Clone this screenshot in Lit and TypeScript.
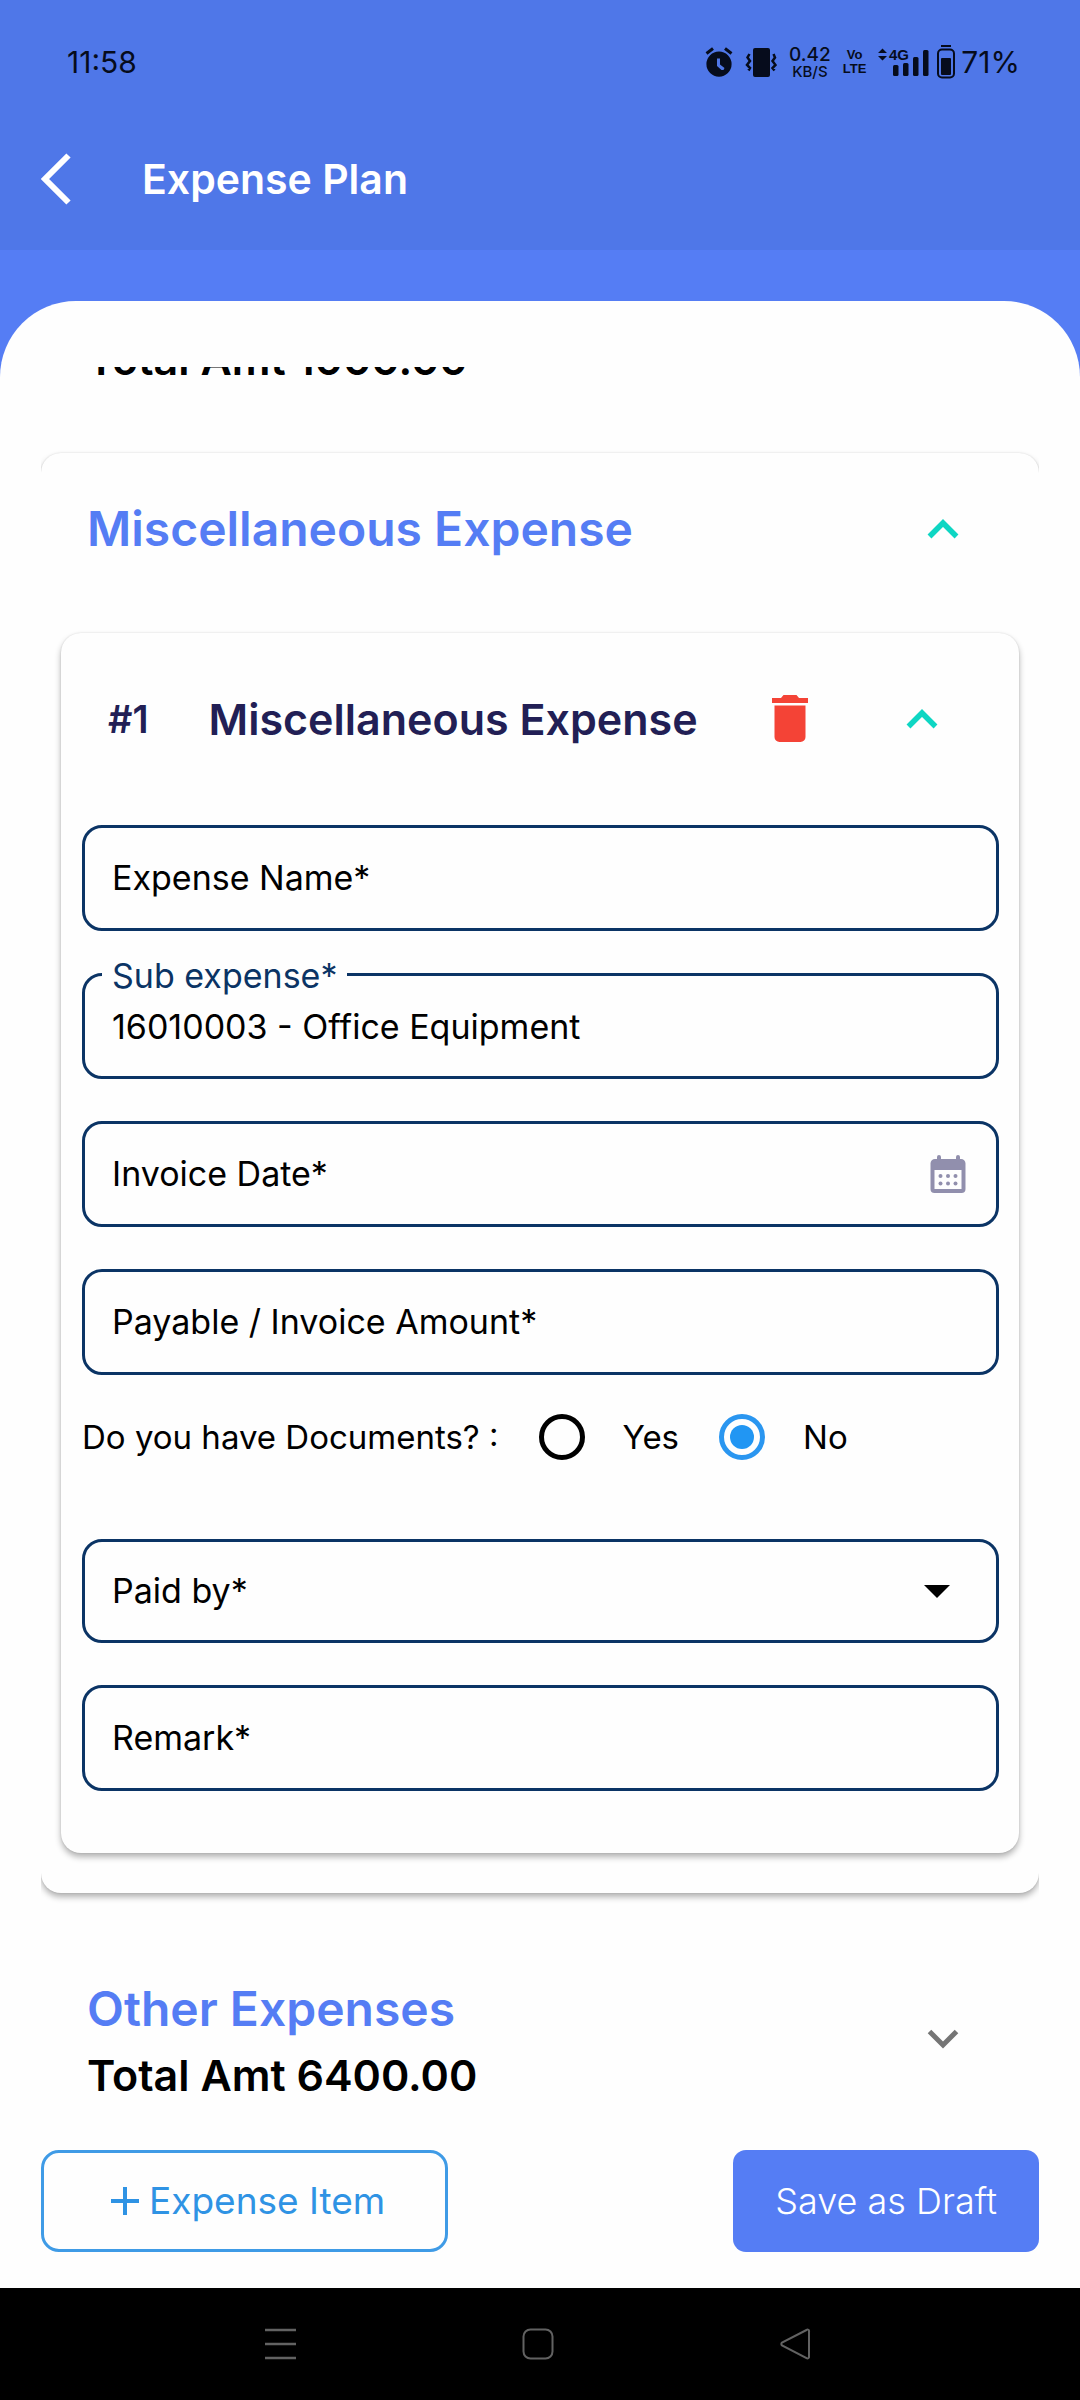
import { LitElement, html, css, svg, nothing } from "lit";
import { customElement, property, state } from "lit/decorators.js";

const chevronUp = html`<svg width="32" height="20" viewBox="0 0 32 20" aria-hidden="true">
  <path d="M2.500 17.500 16 4 29.500 17.500" fill="none" stroke="currentColor" stroke-width="5.500" />
</svg>`;

const chevronDown = html`<svg width="32" height="20" viewBox="0 0 32 20" aria-hidden="true">
  <path d="M2.500 2.500 16 16 29.500 2.500" fill="none" stroke="currentColor" stroke-width="5" />
</svg>`;

@customElement("status-bar")
export class StatusBar extends LitElement {
  static styles = css`
    :host {
      display: flex;
      align-items: center;
      justify-content: space-between;
      height: 124px;
      padding: 0 60px 0 67px;
      box-sizing: border-box;
      color: #060c1c;
      font-family: Inter, Roboto, sans-serif;
    }
    .clock,
    .percent {
      font-size: 30px;
      line-height: 40px;
    }
    .icons {
      display: flex;
      align-items: center;
      gap: 12px;
    }
    .signal {
      display: flex;
      align-items: center;
      gap: 8px;
    }
    .battery {
      display: flex;
      align-items: center;
      gap: 6px;
    }
    .stack {
      display: flex;
      flex-direction: column;
      align-items: center;
    }
    .rate {
      font-size: 19px;
      line-height: 19px;
      font-weight: 500;
    }
    .unit {
      font-size: 15px;
      line-height: 15px;
      font-weight: 500;
    }
    .volte {
      font-family: "Liberation Sans", sans-serif;
      font-weight: 700;
      font-size: 13px;
      line-height: 14px;
    }
    .network {
      font-family: "Liberation Sans", sans-serif;
      font-weight: 700;
      font-size: 15px;
    }
    svg {
      display: block;
      fill: currentColor;
    }
  `;

  render() {
    return html`
      <span class="clock">11:58</span>
      <div class="icons">
        <svg width="28" height="32" viewBox="0 0 28 32" aria-hidden="true">
          <path
            fill-rule="evenodd"
            d="M14 5.500a12.600 12.600 0 1 0 0 25.200 12.600 12.600 0 0 0 0-25.200zM12 12.500h3v6l4.500 3.500-1 2-2 0-4.500-4z"
          />
          <path d="M1.500 7.500 8 2.500M20 2.500 26.500 7.500" stroke="currentColor" stroke-width="3" fill="none" />
        </svg>
        <svg width="32" height="30" viewBox="0 0 32 30" aria-hidden="true">
          <rect x="8" y="1" width="17" height="29" rx="2" />
          <path
            d="M4.500 7 2.500 10.500 5 14 2 18 5 21 3.500 23.500M28.500 7 30 10.500 27.500 14 30.500 18 27.500 21 29.500 23.500"
            stroke="currentColor"
            stroke-width="2.500"
            fill="none"
          />
        </svg>
        <span class="stack"><span class="rate">0.42</span><span class="unit">KB/S</span></span>
        <span class="stack volte"><span>Vo</span><span>LTE</span></span>
        <span class="signal">
          <svg width="51" height="32" viewBox="0 0 51 32" aria-hidden="true">
            <path d="M0 7 4.500 2.500 9 7zM0 10h9l-4.500 4.500z" />
            <text class="network" x="11" y="14">4G</text>
            <rect x="15" y="19" width="5.500" height="11" rx="1.500" />
            <rect x="25" y="17" width="5.500" height="13" rx="1.500" />
            <rect x="35" y="11" width="5.500" height="19" rx="1.500" />
            <rect x="45" y="4" width="5.500" height="26" rx="1.500" />
          </svg>
          <span class="battery">
            <svg width="18" height="34" viewBox="0 0 18 34" aria-hidden="true">
              <rect x="4" y="0" width="10" height="2" />
              <rect x="1" y="4.500" width="16" height="28" rx="4" fill="none" stroke="currentColor" stroke-width="2" />
              <rect x="4" y="13" width="10" height="17" rx="1" />
            </svg>
            <span class="percent">71%</span>
          </span>
        </span>
      </div>
    `;
  }
}

@customElement("expense-field")
export class ExpenseField extends LitElement {
  @property() label = "";
  @property() value = "";
  @property() kind: "text" | "date" | "select" = "text";

  static styles = css`
    :host {
      display: block;
    }
    .field {
      display: grid;
      align-items: center;
      min-height: 106px;
      box-sizing: border-box;
      border: 3px solid #0b3465;
      border-radius: 20px;
      font-family: Inter, Roboto, sans-serif;
      font-size: 34px;
      line-height: 40px;
      color: #000;
    }
    .field.select {
      min-height: 104px;
    }
    .field > * {
      grid-area: 1 / 1;
    }
    .label {
      padding: 0 27px;
      pointer-events: none;
      z-index: 1;
    }
    .label.raised {
      align-self: start;
      justify-self: start;
      margin: -20px 17px 0;
      padding: 0 10px;
      background: #fefefe;
      color: #0b3465;
    }
    .control {
      width: 100%;
      height: 100%;
      min-width: 0;
      box-sizing: border-box;
      margin: 0;
      padding: 0 27px;
      border: 0;
      border-radius: 20px;
      outline: none;
      background: transparent;
      appearance: none;
      font: inherit;
      color: inherit;
    }
    .icon {
      justify-self: end;
      margin-right: 30px;
      padding: 0;
      border: 0;
      background: none;
      color: #918fad;
      z-index: 1;
    }
    .arrow {
      justify-self: end;
      margin-right: 46px;
      pointer-events: none;
    }
    svg {
      display: block;
    }
  `;

  render() {
    return html`
      <div class="field ${this.kind}">
        <label class=${this.value ? "label raised" : "label"} for="control">${this.label}</label>
        ${this.kind === "select"
          ? html`<select class="control" id="control"><option value=""></option></select>
              <svg class="arrow" width="26" height="13" viewBox="0 0 26 13" aria-hidden="true">
                <path d="M0 0h26L13 13z" />
              </svg>`
          : html`<input class="control" id="control" type="text" .value=${this.value} />`}
        ${this.kind === "date"
          ? html`<button class="icon" type="button" aria-label="Pick a date">
              <svg width="36" height="38" viewBox="0 0 36 38" aria-hidden="true">
                <path
                  fill="currentColor"
                  fill-rule="evenodd"
                  d="M7 4V2a2 2 0 0 1 4 0v2h15V2a2 2 0 0 1 4 0v2h1a4.500 4.500 0 0 1 4.500 4.500V34a4 4 0 0 1-4 4H4.500a4 4 0 0 1-4-4V8.500A4.500 4.500 0 0 1 5 4zM4.500 15v19h27V15z"
                />
                <g fill="currentColor">
                  ${[10.5, 18, 25.5].map(
                    (x) => svg`<circle cx=${x} cy="21" r="2" /><circle cx=${x} cy="28.500" r="2" />`
                  )}
                </g>
              </svg>
            </button>`
          : nothing}
      </div>
    `;
  }
}

@customElement("app-root")
export class AppRoot extends LitElement {
  @state() private hasDocuments = false;

  static styles = css`
    :host {
      display: flex;
      flex-direction: column;
      min-height: 100vh;
      background: #557df4;
      font-family: Inter, Roboto, sans-serif;
      color: #000;
    }
    svg {
      display: block;
    }
    button {
      font-family: inherit;
      margin: 0;
      cursor: pointer;
    }
    h1,
    h2,
    h3,
    p {
      margin: 0;
    }
    .header {
      background: #4f77e8;
      padding-bottom: 16px;
    }
    .app-bar {
      display: flex;
      align-items: center;
      gap: 70px;
      height: 110px;
      padding: 0 40px;
      color: #fff;
    }
    .icon-button {
      padding: 0;
      border: 0;
      background: none;
      color: inherit;
    }
    .title {
      font-size: 41px;
      line-height: 56px;
      font-weight: 600;
    }
    .sheet {
      flex: 1;
      display: flex;
      flex-direction: column;
      margin-top: 51px;
      padding: 66px 41px 36px;
      border-radius: 76px 76px 0 0;
      background: #fefefe;
    }
    .scroller {
      flex: 1;
      overflow: hidden;
    }
    .list {
      display: flex;
      flex-direction: column;
      gap: 64px;
      margin-top: -38px;
    }
    .section {
      padding: 0 46px;
    }
    .total {
      font-size: 43px;
      line-height: 60px;
      font-weight: 600;
    }
    .heading {
      font-size: 48px;
      line-height: 72px;
      font-weight: 600;
      color: #557df4;
    }
    .card {
      border-radius: 20px;
      background: #fefefe;
      box-shadow:
        0 0 2px rgba(0, 0, 0, 0.12),
        0 4px 6px rgba(0, 0, 0, 0.3);
    }
    .card-head {
      display: flex;
      align-items: center;
      justify-content: space-between;
      color: #0ed6c3;
    }
    .group {
      padding: 40px 20px;
    }
    .group-head {
      padding: 0 60px 68px 26px;
    }
    .item {
      padding: 0 20px 62px 21px;
    }
    .item-head {
      padding: 50px 61px 70px 26px;
    }
    .name {
      display: flex;
      gap: 60px;
      align-items: center;
      flex: 1;
      color: #221f55;
      font-weight: 600;
      line-height: 72px;
    }
    .index {
      font-size: 38px;
    }
    .item-title {
      font-size: 43px;
    }
    .actions {
      display: flex;
      align-items: center;
      gap: 98px;
    }
    .delete {
      color: #f44336;
    }
    .fields {
      display: flex;
      flex-direction: column;
      gap: 42px;
    }
    .documents {
      display: flex;
      align-items: center;
      gap: 40px;
      min-height: 80px;
      margin: -20px 0 20px;
      padding: 0;
      font-size: 33px;
      line-height: 40px;
    }
    .choice {
      display: flex;
      align-items: center;
      gap: 38px;
    }
    .radio {
      appearance: none;
      flex: none;
      display: grid;
      place-items: center;
      width: 46px;
      height: 46px;
      margin: 0;
      border: 5px solid #000;
      border-radius: 50%;
    }
    .radio:checked {
      border-color: #2a96f0;
    }
    .radio:checked::after {
      content: "";
      width: 24px;
      height: 24px;
      border-radius: 50%;
      background: #2196f3;
    }
    .other {
      display: flex;
      align-items: center;
      justify-content: space-between;
      padding: 16px 80px 24px 46px;
      color: #757575;
    }
    .other .total {
      color: #000;
    }
    .footer {
      display: flex;
      justify-content: space-between;
      align-items: center;
    }
    .add,
    .save {
      min-height: 102px;
      font-size: 36px;
      line-height: 48px;
    }
    .add {
      display: flex;
      align-items: center;
      gap: 10px;
      padding: 0 60px 0 67px;
      border: 3px solid #3f9be6;
      border-radius: 18px;
      background: transparent;
      color: #2f93e4;
      font-size: 37px;
    }
    .save {
      padding: 0 42px;
      border: 0;
      border-radius: 13px;
      background: #557df4;
      color: #fff;
      font-weight: 300;
    }
    .nav {
      display: flex;
      align-items: center;
      justify-content: center;
      gap: 225px;
      height: 112px;
      padding-right: 4px;
      background: #000;
      color: #626262;
    }
  `;

  private renderDocuments() {
    return html`
      <div class="documents" role="radiogroup" aria-labelledby="documents-label">
        <span id="documents-label">Do you have Documents? :</span>
        <label class="choice">
          <input
            class="radio"
            type="radio"
            name="documents"
            .checked=${this.hasDocuments}
            @change=${() => (this.hasDocuments = true)}
          />
          Yes
        </label>
        <label class="choice">
          <input
            class="radio"
            type="radio"
            name="documents"
            .checked=${!this.hasDocuments}
            @change=${() => (this.hasDocuments = false)}
          />
          No
        </label>
      </div>
    `;
  }

  render() {
    return html`
      <header class="header">
        <status-bar></status-bar>
        <div class="app-bar">
          <button class="icon-button" type="button" aria-label="Back">
            <svg width="32" height="52" viewBox="0 0 32 52" aria-hidden="true">
              <path d="M28.500 2.500 5 26l23.500 23.500" fill="none" stroke="currentColor" stroke-width="6" />
            </svg>
          </button>
          <h1 class="title">Expense Plan</h1>
        </div>
      </header>

      <main class="sheet">
        <div class="scroller">
          <div class="list">
            <section class="section">
              <p class="total">Total Amt 1000.00</p>
            </section>

            <section class="card group">
              <div class="card-head group-head">
                <h2 class="heading">Miscellaneous Expense</h2>
                <button class="icon-button" type="button" aria-label="Collapse section">${chevronUp}</button>
              </div>
              <div class="card item">
                <div class="card-head item-head">
                  <h3 class="name"><span class="index">#1</span><span class="item-title">Miscellaneous Expense</span></h3>
                  <div class="actions">
                    <button class="icon-button delete" type="button" aria-label="Delete expense">
                      <svg width="36" height="48" viewBox="0 0 36 48" fill="currentColor" aria-hidden="true">
                        <path d="M0 3h9l2.500-3h13L27 3h9v5H0z" />
                        <path d="M2.500 10.500h31V42a5 5 0 0 1-5 5h-21a5 5 0 0 1-5-5z" />
                      </svg>
                    </button>
                    <button class="icon-button" type="button" aria-label="Collapse expense">${chevronUp}</button>
                  </div>
                </div>
                <div class="fields">
                  <expense-field label="Expense Name*"></expense-field>
                  <expense-field label="Sub expense*" value="16010003 - Office Equipment"></expense-field>
                  <expense-field label="Invoice Date*" kind="date"></expense-field>
                  <expense-field label="Payable / Invoice Amount*"></expense-field>
                  ${this.renderDocuments()}
                  <expense-field label="Paid by*" kind="select"></expense-field>
                  <expense-field label="Remark*"></expense-field>
                </div>
              </div>
            </section>

            <section class="other">
              <div>
                <h2 class="heading">Other Expenses</h2>
                <p class="total">Total Amt 6400.00</p>
              </div>
              <button class="icon-button" type="button" aria-label="Expand section">${chevronDown}</button>
            </section>
          </div>
        </div>

        <footer class="footer">
          <button class="add" type="button">
            <svg width="28" height="28" viewBox="0 0 28 28" aria-hidden="true">
              <path d="M14 0v28M0 14h28" stroke="currentColor" stroke-width="4" />
            </svg>
            Expense Item
          </button>
          <button class="save" type="button">Save as Draft</button>
        </footer>
      </main>

      <nav class="nav" aria-label="System">
        <button class="icon-button" type="button" aria-label="Recent apps">
          <svg width="32" height="32" viewBox="0 0 32 32" aria-hidden="true">
            <path d="M0 2h31M0 16h31M0 30h31" stroke="currentColor" stroke-width="2.500" />
          </svg>
        </button>
        <button class="icon-button" type="button" aria-label="Home">
          <svg width="32" height="32" viewBox="0 0 32 32" aria-hidden="true">
            <rect x="1.500" y="1.500" width="29" height="29" rx="7" fill="none" stroke="currentColor" stroke-width="2" />
          </svg>
        </button>
        <button class="icon-button" type="button" aria-label="Back">
          <svg width="32" height="32" viewBox="0 0 32 32" aria-hidden="true">
            <path
              d="M27.500 2 3 14.500a2 2 0 0 0 0 3L27.500 30a1.500 1.500 0 0 0 2.500-1.500v-25a1.500 1.500 0 0 0-2.500-1.500z"
              fill="none"
              stroke="currentColor"
              stroke-width="2"
            />
          </svg>
        </button>
      </nav>
    `;
  }
}
